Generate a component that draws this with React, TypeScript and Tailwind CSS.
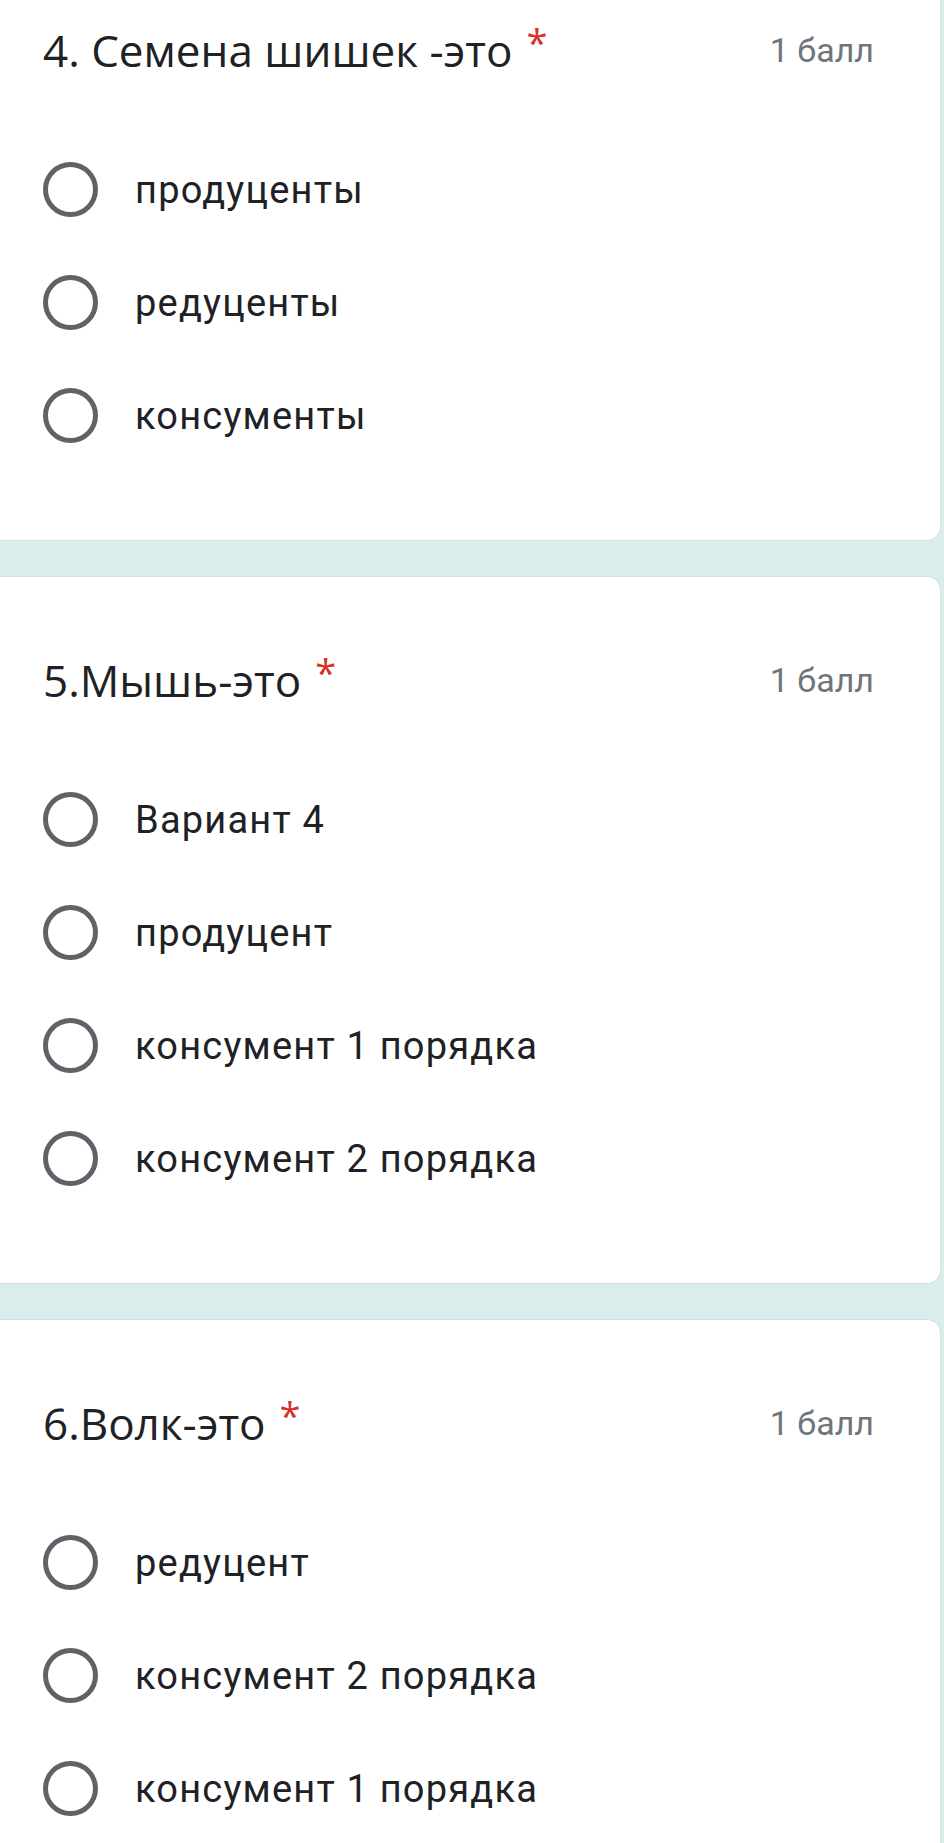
import React from "react";

type Q = { title: string; options: string[] };

const questions: Q[] = [
  { title: "4. Семена шишек -это", options: ["продуценты", "редуценты", "консументы"] },
  { title: "5.Мышь-это", options: ["Вариант 4", "продуцент", "консумент 1 порядка", "консумент 2 порядка"] },
  { title: "6.Волк-это", options: ["редуцент", "консумент 2 порядка", "консумент 1 порядка"] },
];

function Radio() {
  return (
    <div className="h-[55px] w-[55px] shrink-0 rounded-full border-[5px] border-[#5f6368] bg-white" />
  );
}

function Card({ q }: { q: Q }) {
  return (
    <div className="rounded-r-[14px] border-y border-r border-[#dadce0] bg-white pl-[43px] pr-[66px] pt-[75px] pb-[68px]">
      <div className="flex h-[56px] items-center justify-between">
        <div
          className="flex items-center text-[44px] leading-none text-[#202124]"
          style={{ fontFamily: '"Open Sans", "Noto Sans", sans-serif' }}
        >
          <span>{q.title}</span>
          <span className="ml-[14px] -mt-[16px] text-[38px] text-[#d93025]">*</span>
        </div>
        <div
          className="text-[34px] leading-none text-[#70757a]"
          style={{ fontFamily: 'Roboto, "Liberation Sans", sans-serif' }}
        >
          1 балл
        </div>
      </div>
      <div className="mt-[55px] flex flex-col">
        {q.options.map((o, i) => (
          <div key={i} className="flex h-[113px] items-center">
            <Radio />
            <span
              className="ml-[37px] text-[38px] leading-none tracking-[1.2px] text-[#202124]"
              style={{ fontFamily: 'Roboto, "Liberation Sans", sans-serif' }}
            >
              {o}
            </span>
          </div>
        ))}
      </div>
    </div>
  );
}

export default function App() {
  return (
    <div className="h-[1843px] w-[944px] overflow-hidden bg-[#d9eeec]">
      <div className="-mt-[54px] flex flex-col gap-[35px] pr-[3px]">
        {questions.map((q, i) => (
          <Card key={i} q={q} />
        ))}
      </div>
    </div>
  );
}
